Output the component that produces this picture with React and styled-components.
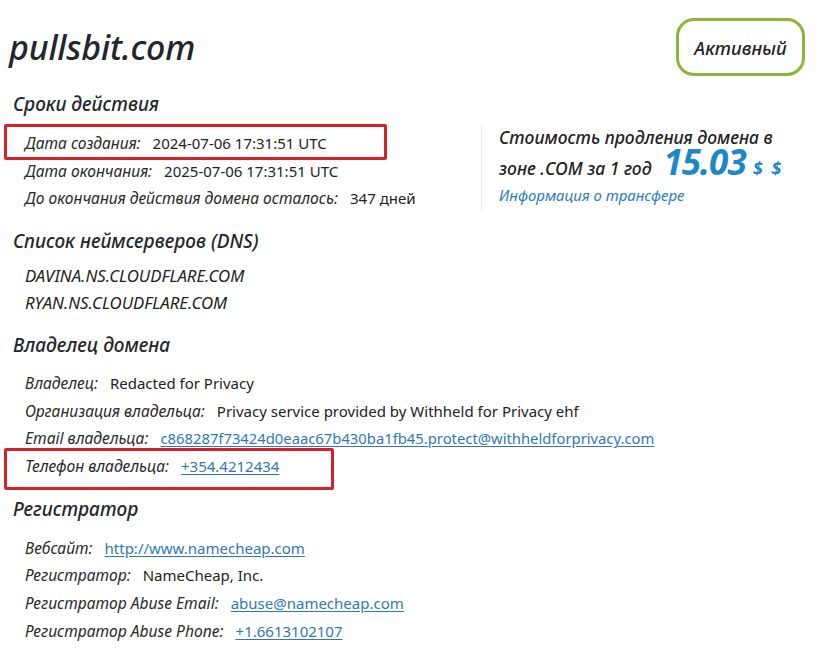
import React from "react";
import styled, { createGlobalStyle } from "styled-components";

const Global = createGlobalStyle`
  html, body { margin: 0; padding: 0; background: #ffffff; }
  body { font-family: "Noto Sans", "Open Sans", sans-serif; color: #222222; }
`;

const Page = styled.div`
  width: 821px;
  box-sizing: border-box;
  padding: 18px 16px 0 9px;
`;

const Header = styled.header`
  display: flex;
  align-items: center;
  justify-content: space-between;
  height: 58px;
`;

const Domain = styled.h1`
  margin: 0;
  font-size: 34px;
  font-weight: 500;
  font-style: italic;
  color: #23272b;
  letter-spacing: -0.2px;
`;

const Status = styled.div`
  box-sizing: border-box;
  height: 58px;
  width: 129px;
  display: flex;
  align-items: center;
  justify-content: center;
  border: 3px solid #8ab63a;
  border-radius: 18px;
  font-size: 18.5px;
  font-style: italic;
  font-weight: 500;
  color: #1f1f1f;
`;

const Body = styled.main`
  display: flex;
  flex-direction: column;
  gap: 14px;
  margin-top: 13px;
  padding-left: 4px;
`;

const Section = styled.section`
  display: flex;
  flex-direction: column;
`;

const SectionTitle = styled.h2`
  margin: 0 0 ${(p) => p.$gap || 7}px;
  height: 30px;
  line-height: 30px;
  font-size: 19px;
  font-weight: 500;
  font-style: italic;
  color: #23272b;
`;

const Split = styled.div`
  display: flex;
  align-items: flex-start;
`;

const Rows = styled.div`
  flex: 1;
  display: flex;
  flex-direction: column;
`;

const Row = styled.div`
  position: relative;
  display: flex;
  align-items: center;
  gap: 12px;
  height: 27.7px;
  padding-left: 12px;
  white-space: nowrap;

  ${(p) =>
    p.$mark &&
    `
    &::after {
      content: "";
      position: absolute;
      left: ${p.$mark.left}px;
      top: ${p.$mark.top}px;
      width: ${p.$mark.width}px;
      height: ${p.$mark.height}px;
      border: 3px solid #d7202a;
      box-sizing: border-box;
      border-radius: 2px;
      pointer-events: none;
    }
  `}
`;

const Label = styled.span`
  font-size: 15.6px;
  font-style: italic;
  color: #2a2a2a;
`;

const Value = styled.span`
  font-size: 15px;
  color: #222222;
`;

const Link = styled.a`
  font-size: ${(p) => p.$size || 15}px;
  color: #2f78b8;
  text-decoration: underline;
  text-underline-offset: 2px;
`;

const Server = styled.div`
  height: 27px;
  display: flex;
  align-items: center;
  padding-left: 12px;
  font-size: 16.8px;
  font-style: italic;
  color: #222222;
`;

const Price = styled.aside`
  width: 300px;
  margin-top: -4px;
  margin-right: 6px;
  padding: 0 0 5px 17px;
  border-left: 1px solid #ececec;
  font-style: italic;
  font-weight: 500;
  font-size: 17.5px;
  color: #222222;
  line-height: 24px;
`;

const PriceLine = styled.div`
  display: flex;
  align-items: baseline;
  gap: 12px;
  height: 34px;
  line-height: 34px;
  white-space: nowrap;
`;

const Amount = styled.span`
  font-size: 35px;
  font-weight: 700;
  color: #1d87c8;
  letter-spacing: -1px;
  line-height: 26px;
`;

const Currency = styled.span`
  margin-left: -5px;
  font-size: 18px;
  font-weight: 700;
  color: #1d87c8;
  letter-spacing: 2px;
  line-height: 26px;
`;

const Transfer = styled.a`
  display: block;
  font-size: 15px;
  font-weight: 400;
  color: #2a7dbd;
  text-decoration: none;
  line-height: 24px;
`;

export default function App() {
  return (
    <Page>
      <Global />
      <Header>
        <Domain>pullsbit.com</Domain>
        <Status>Активный</Status>
      </Header>

      <Body>
        <Section>
          <SectionTitle $gap={10}>Сроки действия</SectionTitle>
          <Split>
            <Rows>
              <Row $mark={{ left: -9, top: -5, width: 383, height: 36 }}>
                <Label>Дата создания:</Label>
                <Value>2024-07-06 17:31:51 UTC</Value>
              </Row>
              <Row>
                <Label>Дата окончания:</Label>
                <Value>2025-07-06 17:31:51 UTC</Value>
              </Row>
              <Row>
                <Label>До окончания действия домена осталось:</Label>
                <Value>347 дней</Value>
              </Row>
            </Rows>
            <Price>
              <div>Стоимость продления домена в</div>
              <PriceLine>
                <span>зоне .COM за 1 год</span>
                <Amount>15.03</Amount>
                <Currency>$ $</Currency>
              </PriceLine>
              <Transfer href="#">Информация о трансфере</Transfer>
            </Price>
          </Split>
        </Section>

        <Section>
          <SectionTitle $gap={6}>Список неймсерверов (DNS)</SectionTitle>
          <Server>DAVINA.NS.CLOUDFLARE.COM</Server>
          <Server>RYAN.NS.CLOUDFLARE.COM</Server>
        </Section>

        <Section>
          <SectionTitle $gap={9}>Владелец домена</SectionTitle>
          <Row>
            <Label>Владелец:</Label>
            <Value>Redacted for Privacy</Value>
          </Row>
          <Row>
            <Label>Организация владельца:</Label>
            <Value>Privacy service provided by Withheld for Privacy ehf</Value>
          </Row>
          <Row>
            <Label>Email владельца:</Label>
            <Link href="#" $size={14.8}>
              c868287f73424d0eaac67b430ba1fb45.protect@withheldforprivacy.com
            </Link>
          </Row>
          <Row $mark={{ left: -9, top: -4, width: 330, height: 42 }}>
            <Label>Телефон владельца:</Label>
            <Link href="#">+354.4212434</Link>
          </Row>
        </Section>

        <Section>
          <SectionTitle $gap={10}>Регистратор</SectionTitle>
          <Row>
            <Label>Вебсайт:</Label>
            <Link href="#">http://www.namecheap.com</Link>
          </Row>
          <Row>
            <Label>Регистратор:</Label>
            <Value>NameCheap, Inc.</Value>
          </Row>
          <Row>
            <Label>Регистратор Abuse Email:</Label>
            <Link href="#">abuse@namecheap.com</Link>
          </Row>
          <Row>
            <Label>Регистратор Abuse Phone:</Label>
            <Link href="#">+1.6613102107</Link>
          </Row>
        </Section>
      </Body>
    </Page>
  );
}
